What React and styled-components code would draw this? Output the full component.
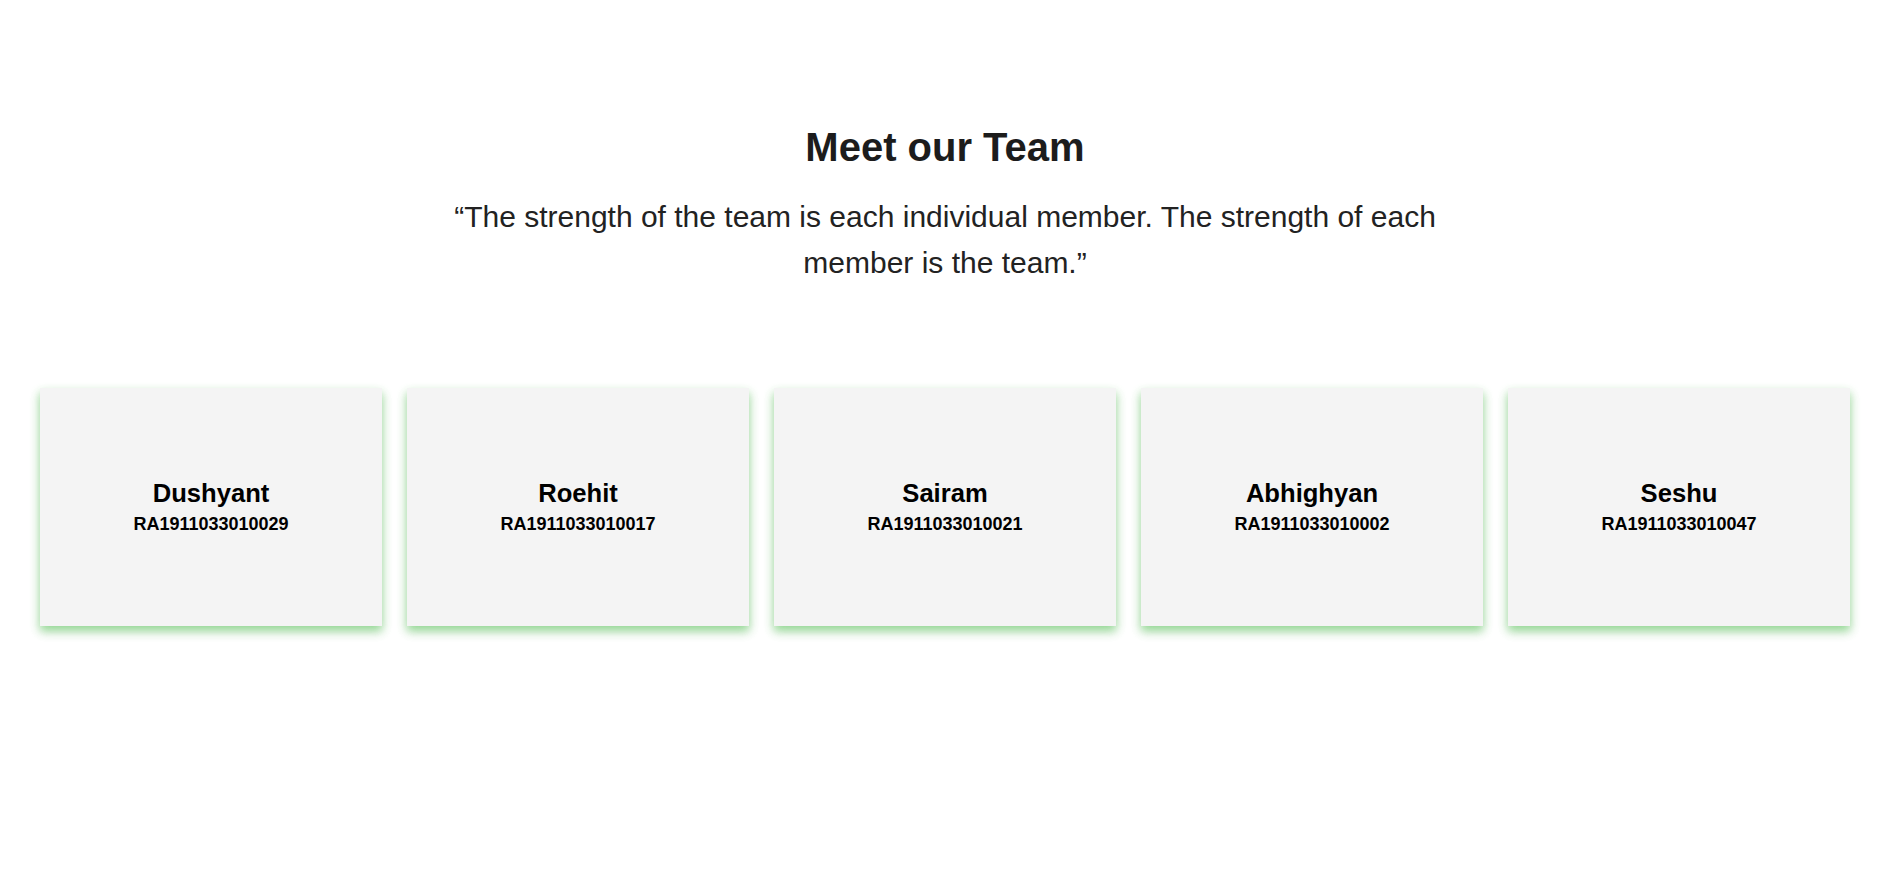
import React from 'react'
import styled, { createGlobalStyle } from 'styled-components'

const GlobalStyle = createGlobalStyle`
  body {
    margin: 0;
    background-color: #fff;
    font-family: "Liberation Sans", Arial, sans-serif;
  }
`

export const TeamSection = styled.section`
  min-height: 872px;
  box-sizing: border-box;
  padding: 124px 40px 60px;
  text-align: center;
`
export const TeamTitle = styled.h1`
  margin: 0;
  font-size: 40px;
  line-height: 46px;
  font-weight: 700;
  color: #1c1c1c;
`
export const TeamQuote = styled.p`
  max-width: 1000px;
  margin: 24px auto 0;
  font-size: 30px;
  line-height: 46px;
  color: #222;
`
export const CardRow = styled.div`
  display: flex;
  gap: 25px;
  margin-top: 102px;
`
export const Card = styled.div`
  flex: 1;
  height: 238px;
  background-color: #f4f4f4;
  display: flex;
  flex-direction: column;
  justify-content: center;
  align-items: center;
  gap: 6px;
  box-shadow: 0 5px 9px 0 rgba(40, 190, 40, 0.45), 0 6px 12px 0 rgba(0, 0, 0, 0.08);
`
export const CardName = styled.h3`
  margin: 0;
  font-size: 25.6px;
  font-weight: 700;
  color: #000;
`
export const CardId = styled.span`
  font-size: 18px;
  font-weight: 700;
  color: #000;
`

const members = [
  { name: 'Dushyant', id: 'RA1911033010029' },
  { name: 'Roehit', id: 'RA1911033010017' },
  { name: 'Sairam', id: 'RA1911033010021' },
  { name: 'Abhighyan', id: 'RA1911033010002' },
  { name: 'Seshu', id: 'RA1911033010047' },
]

const App = () => {
  return (
    <>
      <GlobalStyle />
      <TeamSection>
        <TeamTitle>Meet our Team</TeamTitle>
        <TeamQuote>
          “The strength of the team is each individual member. The strength of each member is the team.”
        </TeamQuote>
        <CardRow>
          {members.map(m => (
            <Card key={m.id}>
              <CardName>{m.name}</CardName>
              <CardId>{m.id}</CardId>
            </Card>
          ))}
        </CardRow>
      </TeamSection>
    </>
  )
}

export default App
